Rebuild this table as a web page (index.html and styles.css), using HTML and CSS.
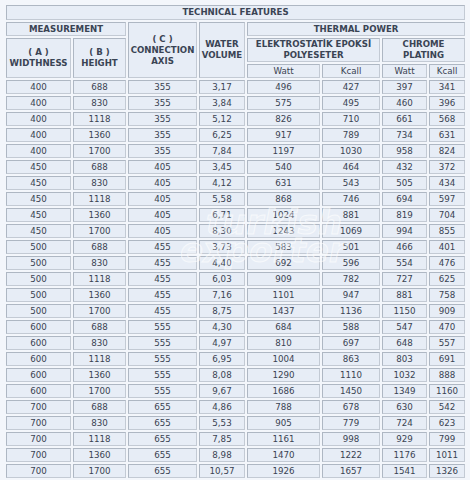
FILE: index.html
```html
<!DOCTYPE html>
<html>
<head>
<meta charset="utf-8">
<link rel="stylesheet" href="styles.css">
</head>
<body>
<div class="wrap">
<table class="tf">
<colgroup>
<col class="c-a"><col class="c-b"><col class="c-c"><col class="c-w"><col class="c-ew"><col class="c-ek"><col class="c-cw"><col class="c-ck">
</colgroup>
<thead>
<tr class="r1"><th colspan="8">TECHNICAL FEATURES</th></tr>
<tr class="r2"><th colspan="2">MEASUREMENT</th><th rowspan="3">( C )<br>CONNECTION<br>AXIS</th><th rowspan="3">WATER<br>VOLUME</th><th colspan="4">THERMAL POWER</th></tr>
<tr class="r3"><th rowspan="2" class="ab">( A )<br>WIDTHNESS</th><th rowspan="2" class="ab">( B )<br>HEIGHT</th><th colspan="2">ELEKTROSTATİK EPOKSİ<br>POLYESETER</th><th colspan="2">CHROME<br>PLATING</th></tr>
<tr class="r4"><td>Watt</td><td>Kcall</td><td>Watt</td><td>Kcall</td></tr>
</thead>
<tbody>
<tr><td>400</td><td>688</td><td>355</td><td>3,17</td><td>496</td><td>427</td><td>397</td><td>341</td></tr>
<tr><td>400</td><td>830</td><td>355</td><td>3,84</td><td>575</td><td>495</td><td>460</td><td>396</td></tr>
<tr><td>400</td><td>1118</td><td>355</td><td>5,12</td><td>826</td><td>710</td><td>661</td><td>568</td></tr>
<tr><td>400</td><td>1360</td><td>355</td><td>6,25</td><td>917</td><td>789</td><td>734</td><td>631</td></tr>
<tr><td>400</td><td>1700</td><td>355</td><td>7,84</td><td>1197</td><td>1030</td><td>958</td><td>824</td></tr>
<tr><td>450</td><td>688</td><td>405</td><td>3,45</td><td>540</td><td>464</td><td>432</td><td>372</td></tr>
<tr><td>450</td><td>830</td><td>405</td><td>4,12</td><td>631</td><td>543</td><td>505</td><td>434</td></tr>
<tr><td>450</td><td>1118</td><td>405</td><td>5,58</td><td>868</td><td>746</td><td>694</td><td>597</td></tr>
<tr><td>450</td><td>1360</td><td>405</td><td>6,71</td><td>1024</td><td>881</td><td>819</td><td>704</td></tr>
<tr><td>450</td><td>1700</td><td>405</td><td>8,30</td><td>1243</td><td>1069</td><td>994</td><td>855</td></tr>
<tr><td>500</td><td>688</td><td>455</td><td>3,73</td><td>583</td><td>501</td><td>466</td><td>401</td></tr>
<tr><td>500</td><td>830</td><td>455</td><td>4,40</td><td>692</td><td>596</td><td>554</td><td>476</td></tr>
<tr><td>500</td><td>1118</td><td>455</td><td>6,03</td><td>909</td><td>782</td><td>727</td><td>625</td></tr>
<tr><td>500</td><td>1360</td><td>455</td><td>7,16</td><td>1101</td><td>947</td><td>881</td><td>758</td></tr>
<tr><td>500</td><td>1700</td><td>455</td><td>8,75</td><td>1437</td><td>1136</td><td>1150</td><td>909</td></tr>
<tr><td>600</td><td>688</td><td>555</td><td>4,30</td><td>684</td><td>588</td><td>547</td><td>470</td></tr>
<tr><td>600</td><td>830</td><td>555</td><td>4,97</td><td>810</td><td>697</td><td>648</td><td>557</td></tr>
<tr><td>600</td><td>1118</td><td>555</td><td>6,95</td><td>1004</td><td>863</td><td>803</td><td>691</td></tr>
<tr><td>600</td><td>1360</td><td>555</td><td>8,08</td><td>1290</td><td>1110</td><td>1032</td><td>888</td></tr>
<tr><td>600</td><td>1700</td><td>555</td><td>9,67</td><td>1686</td><td>1450</td><td>1349</td><td>1160</td></tr>
<tr><td>700</td><td>688</td><td>655</td><td>4,86</td><td>788</td><td>678</td><td>630</td><td>542</td></tr>
<tr><td>700</td><td>830</td><td>655</td><td>5,53</td><td>905</td><td>779</td><td>724</td><td>623</td></tr>
<tr><td>700</td><td>1118</td><td>655</td><td>7,85</td><td>1161</td><td>998</td><td>929</td><td>799</td></tr>
<tr><td>700</td><td>1360</td><td>655</td><td>8,98</td><td>1470</td><td>1222</td><td>1176</td><td>1011</td></tr>
<tr><td>700</td><td>1700</td><td>655</td><td>10,57</td><td>1926</td><td>1657</td><td>1541</td><td>1326</td></tr>
</tbody>
</table>
<div class="watermark"><span class="wm1">turkish</span><span class="wm2">exporter</span></div>
</div>
</body>
</html>
```

FILE: styles.css
```css
html, body {
  margin: 0;
  padding: 0;
  background: #f3f6fb;
}
.wrap {
  position: relative;
  width: 470px;
  height: 480px;
  overflow: hidden;
}
.tf {
  margin: 3px 0 0 4px;
  width: 463px;
  table-layout: fixed;
  border-collapse: separate;
  border-spacing: 2px;
  font-family: "DejaVu Sans", Verdana, sans-serif;
  font-size: 8.7px;
  color: #3a4352;
}
.c-a { width: 65px; }
.c-b { width: 53px; }
.c-c { width: 69px; }
.c-w { width: 46px; }
.c-ew { width: 73px; }
.c-ek { width: 58px; }
.c-cw { width: 45px; }
.c-ck { width: 36px; }
.tf th, .tf td {
  box-sizing: border-box;
  padding: 0;
  background: #e7edf6;
  border: 1px solid #aeb7c3;
  border-right-color: #c3cad4;
  border-bottom-color: #c3cad4;
  text-align: center;
  vertical-align: middle;
  white-space: nowrap;
  overflow: hidden;
}
.tf th {
  font-weight: bold;
  font-size: 8.6px;
  line-height: 11px;
  color: #3a4454;
}
.r1 th { height: 15px; }
.r2 th { height: 14px; }
.r3 th { height: 23px; }
.r4 td { height: 14px; line-height: 12px; }
.tf tbody td {
  height: 13.7px;
  line-height: 12px;
}
.watermark {
  position: absolute;
  left: 180px;
  top: 208px;
  display: flex;
  flex-direction: column;
  font-family: "DejaVu Sans", sans-serif;
  font-style: italic;
  font-weight: bold;
  font-size: 34px;
  line-height: 28px;
  color: rgba(255, 255, 255, 0.2);
  -webkit-text-stroke: 1px rgba(255, 255, 255, 0.6);
  pointer-events: none;
}
.wm1 { padding-left: 26px; }
.wm2 { padding-left: 0; }
```
